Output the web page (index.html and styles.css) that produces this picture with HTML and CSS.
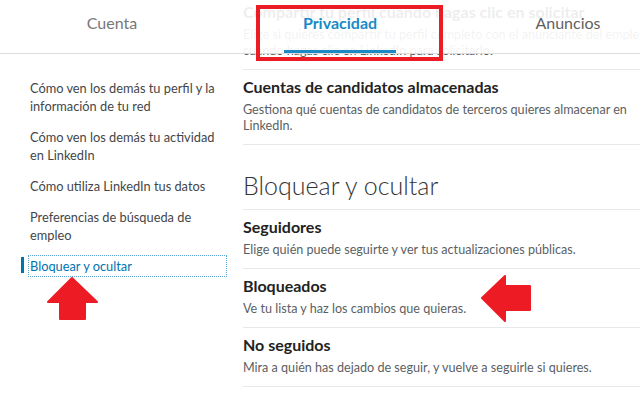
FILE: index.html
```html
<!DOCTYPE html>
<html lang="es">
<head>
<meta charset="utf-8">
<title>Privacidad</title>
<link rel="stylesheet" href="styles.css">
</head>
<body>
<div class="page">
  <main class="layout">
    <nav class="side">
      <a class="side-item">Cómo ven los demás tu perfil y la información de tu red</a>
      <a class="side-item">Cómo ven los demás tu actividad en LinkedIn</a>
      <a class="side-item">Cómo utiliza LinkedIn tus datos</a>
      <a class="side-item">Preferencias de búsqueda de empleo</a>
      <a class="side-item current">Bloquear y ocultar</a>
    </nav>
    <section class="content">
      <div class="setting">
        <h3>Compartir tu perfil cuando hagas clic en solicitar</h3>
        <p>Elige si quieres compartir tu perfil completo con el anunciante del empleo<br>cuando hagas clic en LinkedIn para solicitarlo.</p>
      </div>
      <div class="setting">
        <h3>Cuentas de candidatos almacenadas</h3>
        <p>Gestiona qué cuentas de candidatos de terceros quieres almacenar en<br>LinkedIn.</p>
      </div>
      <h2 class="section-title">Bloquear y ocultar</h2>
      <div class="setting">
        <h3>Seguidores</h3>
        <p>Elige quién puede seguirte y ver tus actualizaciones públicas.</p>
      </div>
      <div class="setting">
        <h3>Bloqueados</h3>
        <p>Ve tu lista y haz los cambios que quieras.</p>
      </div>
      <div class="setting">
        <h3>No seguidos</h3>
        <p>Mira a quién has dejado de seguir, y vuelve a seguirle si quieres.</p>
      </div>
    </section>
  </main>

  <header class="tabs">
    <a class="tab"><span class="tab-label">Cuenta</span></a>
    <a class="tab active"><span class="tab-label">Privacidad</span></a>
    <a class="tab ads"><span class="tab-label">Anuncios</span></a>
  </header>

  <div class="highlight"></div>

  <svg class="arrow arrow-up" width="54" height="46" viewBox="0 0 54 46">
    <path d="M26 2 L51 26 L39 26 L39 43 L14 43 L14 26 L2 26 Z" fill="#ed1c24" stroke="#ed1c24" stroke-width="2" stroke-linejoin="round"/>
  </svg>
  <svg class="arrow arrow-left" width="52" height="50" viewBox="0 0 52 50">
    <path d="M2 24 L25 2 L25 12 L50 12 L50 36 L25 36 L25 47 Z" fill="#ed1c24" stroke="#ed1c24" stroke-width="2" stroke-linejoin="round"/>
  </svg>
</div>
</body>
</html>
```

FILE: styles.css
```css
* { box-sizing: border-box; }

html, body {
  margin: 0;
  padding: 0;
  background: #fff;
}

body {
  font-family: Lato, "Liberation Sans", sans-serif;
  color: #333;
}

.page {
  position: relative;
  width: 640px;
  height: 396px;
  overflow: hidden;
  background: #fff;
}

.layout {
  display: flex;
  align-items: flex-start;
}

/* Sidebar */
.side {
  width: 243px;
  flex: none;
  padding: 79px 0 0 30px;
  display: flex;
  flex-direction: column;
  gap: 13px;
}

.side-item {
  position: relative;
  width: 195px;
  font-size: 12.8px;
  line-height: 18px;
  color: #434649;
  text-decoration: none;
}

.side-item.current {
  color: #0073b1;
  outline: 1px dotted #5aa7d3;
  outline-offset: 1px;
}

.side-item.current::before {
  content: "";
  position: absolute;
  left: -9px;
  top: 0;
  width: 3px;
  height: 16px;
  background: #0073b1;
}

/* Content column */
.content {
  width: 420px;
  flex: none;
  margin-top: -5px;
}

.setting {
  padding: 7px 0 10px;
  border-bottom: 1px solid #e6e9ec;
  margin-right: -40px;
}

.setting h3 {
  margin: 0 0 5px;
  font-size: 16px;
  line-height: 20px;
  font-weight: 700;
  color: #222;
}

.setting p {
  margin: 0;
  font-size: 12.6px;
  line-height: 16px;
  color: #5b5f63;
}

.section-title {
  margin: 0 -40px 0 0;
  padding: 24px 0 8px;
  font-size: 25px;
  line-height: 32px;
  font-weight: 300;
  color: #333;
  border-bottom: 1px solid #e6e9ec;
}

/* Header tabs overlay */
.tabs {
  position: absolute;
  top: 0;
  left: -2px;
  width: 644px;
  height: 54px;
  display: grid;
  grid-template-columns: 228px 228px 228px;
  background: rgba(255, 255, 255, 0.92);
  border-bottom: 1px solid #dcdcdc;
}

.tab {
  display: flex;
  justify-content: center;
  align-items: flex-end;
  text-decoration: none;
}

.tab-label {
  padding: 0 19px 17px;
  border-bottom: 3px solid transparent;
  font-size: 16px;
  line-height: 20px;
  color: #777;
}

.tab.active .tab-label {
  color: #1a8ac7;
  font-weight: 700;
  border-bottom-color: #1a8ac7;
}

.tab.ads .tab-label {
  color: #5f5f5f;
}

/* Annotations */
.highlight {
  position: absolute;
  left: 256px;
  top: 5px;
  width: 187px;
  height: 56px;
  border: 4px solid #ec1c24;
}

.arrow {
  position: absolute;
  display: block;
}

.arrow-up {
  left: 46px;
  top: 276px;
}

.arrow-left {
  left: 480px;
  top: 274px;
}
```
